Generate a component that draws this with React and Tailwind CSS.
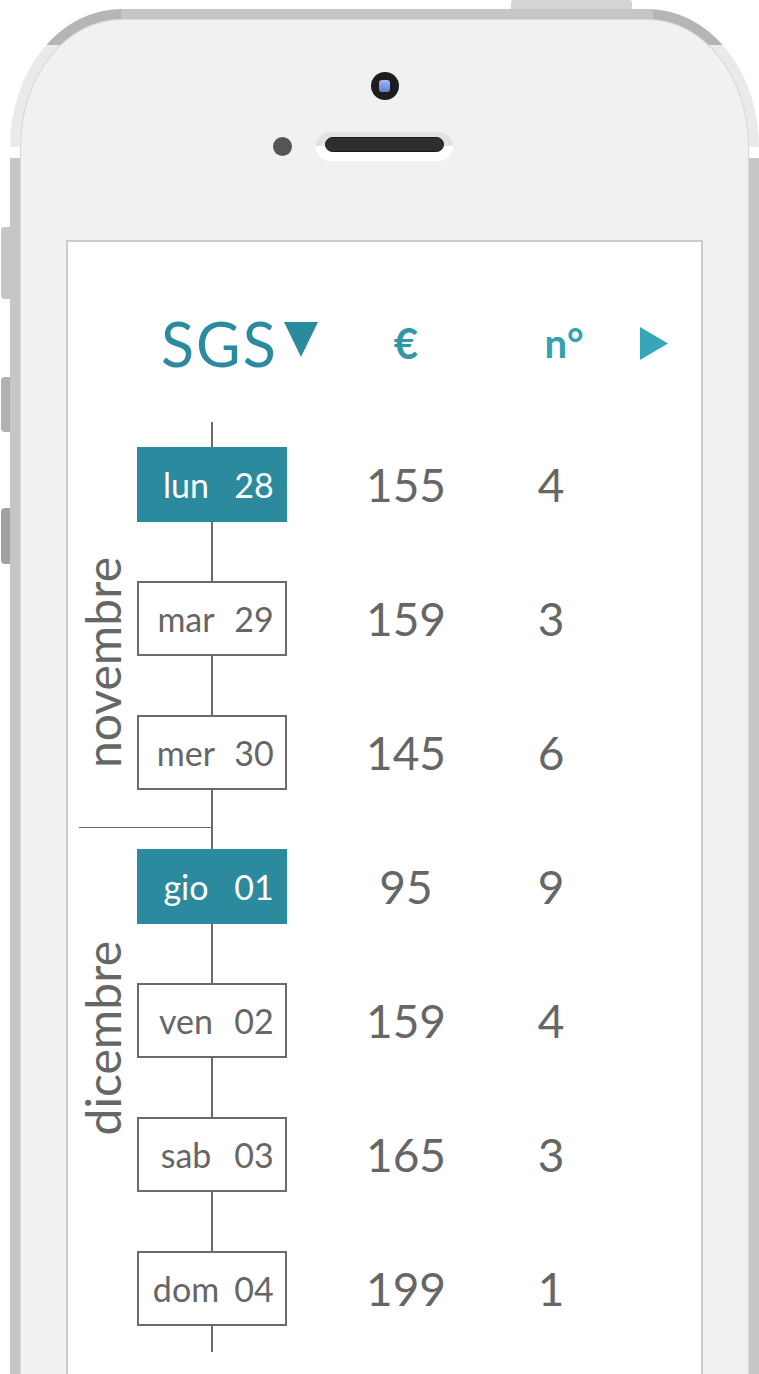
const rows = [
  { day: "lun", num: "28", amount: 155, count: 4, active: true },
  { day: "mar", num: "29", amount: 159, count: 3 },
  { day: "mer", num: "30", amount: 145, count: 6 },
  { day: "gio", num: "01", amount: 95, count: 9, active: true },
  { day: "ven", num: "02", amount: 159, count: 4 },
  { day: "sab", num: "03", amount: 165, count: 3 },
  { day: "dom", num: "04", amount: 199, count: 1 },
];

function DayRow({ row }) {
  return (
    <div className="flex items-center">
      <div
        className={
          row.active
            ? "relative z-10 flex h-[75px] w-[150px] items-center border-2 border-[#2b8a9e] bg-[#2b8a9e] text-white"
            : "relative z-10 flex h-[75px] w-[150px] items-center border-[2.5px] border-[#6b6b6b] bg-white text-[#666666]"
        }
      >
        <span className="w-[94px] text-center text-[34px] leading-none">{row.day}</span>
        <span className="w-[42px] text-center text-[34px] leading-none">{row.num}</span>
      </div>
      <div className="w-[238px] text-center text-[46px] leading-none text-[#666666]">{row.amount}</div>
      <div className="w-[52px] text-center text-[46px] leading-none text-[#666666]">{row.count}</div>
    </div>
  );
}

export default function App() {
  return (
    <div className="relative h-[1374px] w-[759px] overflow-hidden bg-white font-['Lato',sans-serif]">
      {/* hardware buttons */}
      <div className="absolute left-[511px] top-0 h-[12px] w-[121px] rounded-t-[3px] bg-[#d3d4d4]" />
      <div className="absolute left-[1px] top-[227px] h-[72px] w-[12px] rounded-l-[4px] bg-[#c4c5c5]" />
      <div className="absolute left-[1px] top-[377px] h-[55px] w-[12px] rounded-l-[4px] bg-[#b0b1b1]" />
      <div className="absolute left-[1px] top-[508px] h-[56px] w-[12px] rounded-l-[4px] bg-[#a0a1a0]" />

      {/* phone body */}
      <div className="relative ml-[10px] mt-[9px] flex h-[1365px] w-[749px] flex-col rounded-t-[111px_138px] bg-[linear-gradient(to_bottom,#b4b6b5_0px,#b4b6b5_36px,#e9eaea_36px,#e9eaea_138px,#ffffff_138px,#ffffff_149px,#c6c6c6_149px)] px-[10px] pt-[10px]">
        <div className="absolute left-[111px] top-0 h-[10px] w-[532px] bg-[#c6c6c6]" />

        <div className="relative flex flex-1 flex-col items-center rounded-t-[101px_128px] border border-b-0 border-[#d7d8d9] bg-[#f0f1f3] pt-[52px]">
          {/* camera */}
          <div className="flex h-[28px] w-[28px] items-center justify-center rounded-full bg-[#1d1d1f]">
            <div className="h-[12px] w-[11px] rounded-[3px] bg-[linear-gradient(to_bottom,#a3b8f2,#5f7fd8)]" />
          </div>

          {/* sensor + speaker */}
          <div className="mt-[32px] flex items-center">
            <div className="h-[19px] w-[19px] rounded-full bg-[#555555]" />
            <div className="ml-[24px] h-[29px] w-[137px] rounded-full bg-[linear-gradient(to_bottom,#e1e2e4_50%,#ffffff_50%)] px-[9px] pt-[5px]">
              <div className="h-[15px] w-full rounded-full border border-[#1c1c1c] bg-[#2e2e30]" />
            </div>
            <div className="w-[43px]" />
          </div>

          {/* screen */}
          <div className="mt-[79px] flex w-[637px] flex-1 flex-col border-2 border-b-0 border-[#cbcbcb] bg-white">
            {/* header */}
            <div className="mt-[71px] flex h-[60px] items-center">
              <div className="ml-[93px] flex w-[215px] items-start">
                <span className="text-[61px] leading-none tracking-[2px] text-[#2b8a9e]">SGS</span>
                <svg width="34" height="35" viewBox="0 0 34 35" className="ml-[6px] mt-[9px]">
                  <polygon points="0,0 34,0 17,35" fill="#2b8a9e" />
                </svg>
              </div>
              <div className="w-[60px] text-center text-[42px] font-bold leading-none text-[#3396a9]">€</div>
              <div className="ml-[98px] w-[60px] text-center text-[40px] font-bold leading-none text-[#35a0b3]">n°</div>
              <svg width="28" height="33" viewBox="0 0 28 33" className="ml-[46px]">
                <polygon points="0,0 28,16.5 0,33" fill="#37a6b8" />
              </svg>
            </div>

            {/* list */}
            <div className="relative mt-[49px] flex">
              <div className="flex w-[69px] flex-col">
                <div className="flex h-[405px] flex-col items-center justify-center pt-[76px]">
                  <span className="rotate-180 text-[48px] leading-none text-[#666666] [writing-mode:vertical-rl]">novembre</span>
                </div>
                <div className="flex h-[525px] flex-col items-center justify-center pb-[103px]">
                  <span className="rotate-180 text-[48px] leading-none text-[#666666] [writing-mode:vertical-rl]">dicembre</span>
                </div>
              </div>

              <div className="relative flex flex-col gap-[59px] pb-[26px] pt-[25px]">
                <div className="absolute bottom-0 left-[74px] top-0 w-[2px] bg-[#6b6b6b]" />
                {rows.map((row) => (
                  <DayRow key={row.day} row={row} />
                ))}
              </div>

              <div className="absolute left-[11px] top-[405px] h-px w-[134px] bg-[#6b6b6b]" />
            </div>
          </div>
        </div>
      </div>
    </div>
  );
}
